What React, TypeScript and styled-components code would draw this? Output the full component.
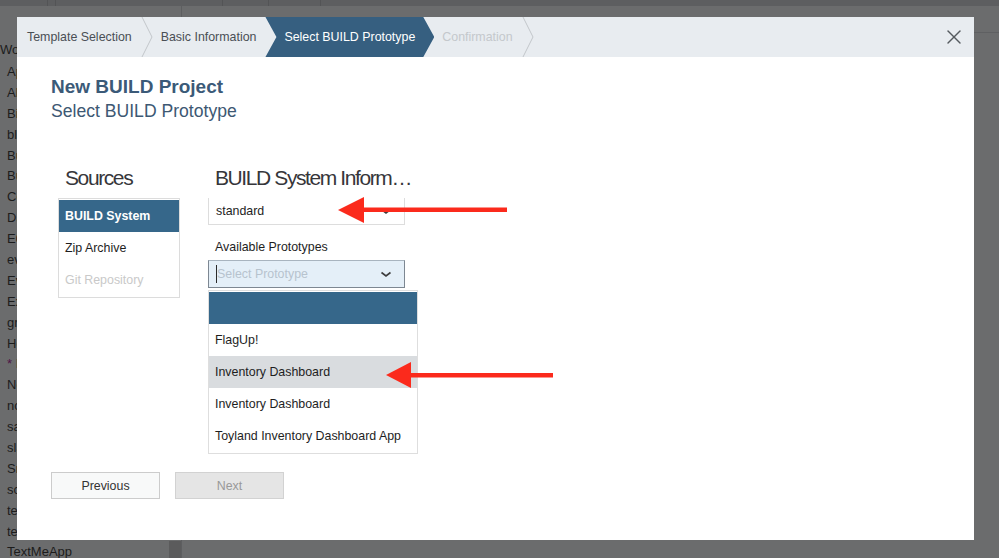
import React from "react";
import styled, { createGlobalStyle } from "styled-components";
import { X } from "lucide-react";

const Global = createGlobalStyle`
  html, body { margin: 0; padding: 0; }
  body { font-family: "Liberation Sans", Arial, sans-serif; background: #6b6c6d; }
  * { box-sizing: border-box; }
`;

const FS = "12.4px";

const Screen = styled.div`
  position: relative;
  width: 999px;
  height: 558px;
  overflow: hidden;
  background: #6b6c6d;
  display: flex;
  flex-direction: column;
`;

const TopStrip = styled.div`
  height: 6px;
  flex-shrink: 0;
  background: #5d5e60;
  display: flex;
`;

const StripCell = styled.div<{ $w: number }>`
  width: ${(p) => p.$w}px;
  border-right: 1px solid #535456;
`;

const PageBody = styled.div`
  flex: 1;
  display: flex;
  min-height: 0;
`;

const LeftPanel = styled.div`
  width: 182px;
  border-right: 1px solid #5d5e60;
  display: flex;
  flex-direction: column;
`;

const LeftToolbar = styled.div`
  height: 33px;
  flex-shrink: 0;
`;

const LeftRow = styled.div`
  flex: 1;
  display: flex;
  min-height: 0;
`;

const ListCol = styled.div`
  flex: 1;
  overflow: hidden;
  font-size: 13px;
  color: #1c1c1c;
`;

const ListHeading = styled.div`
  height: 22px;
  line-height: 22px;
  white-space: nowrap;
`;

const ListItem = styled.div`
  height: 20.9px;
  line-height: 21px;
  padding-left: 7px;
  white-space: nowrap;
`;

const Star = styled.span`
  color: #4e1647;
`;

const ScrollTrack = styled.div`
  width: 12px;
  display: flex;
  flex-direction: column;
`;

const ScrollThumb = styled.div`
  margin-top: auto;
  height: 17px;
  background: #5b5b5c;
`;

const MainArea = styled.div`
  flex: 1;
`;

const MainToolbar = styled.div`
  height: 27px;
  border-bottom: 1px solid #5f6062;
`;

/* ---------- Modal ---------- */

const Modal = styled.div`
  position: absolute;
  left: 17px;
  top: 17px;
  width: 957px;
  height: 523px;
  background: #ffffff;
  display: flex;
  flex-direction: column;
`;

const Header = styled.div`
  height: 40px;
  flex-shrink: 0;
  background: #e8ecf0;
  display: flex;
  align-items: stretch;
  font-size: ${FS};
`;

const Step = styled.div<{ $first?: boolean; $disabled?: boolean }>`
  display: flex;
  align-items: center;
  padding: 0 9px 0 ${(p) => (p.$first ? 10 : 8)}px;
  color: ${(p) => (p.$disabled ? "#c4c8cc" : "#4a4f55")};
  white-space: nowrap;
`;

const ActiveStep = styled.div`
  display: flex;
  align-items: center;
  padding: 0 19px 0 19px;
  color: #ffffff;
  background: #365f80;
  white-space: nowrap;
  clip-path: polygon(0 0, calc(100% - 11px) 0, 100% 50%, calc(100% - 11px) 100%, 0 100%, 11px 50%);
`;

const Sep = styled.svg`
  width: 12px;
  height: 40px;
  flex-shrink: 0;
`;

const Spacer = styled.div`
  flex: 1;
`;

const CloseButton = styled.button`
  border: 0;
  background: transparent;
  padding: 0;
  margin-right: 8px;
  display: flex;
  align-items: center;
  color: #555a5f;
  cursor: pointer;
`;

const Body = styled.div`
  padding: 18px 34px 0 34px;
  display: flex;
  flex-direction: column;
`;

const Title = styled.div`
  font-size: 19px;
  font-weight: bold;
  line-height: 24px;
  color: #3b5a78;
`;

const Subtitle = styled.div`
  font-size: 17.6px;
  line-height: 24px;
  color: #3d5873;
`;

const Columns = styled.div`
  margin-top: 40px;
  padding-left: 7px;
  display: flex;
  align-items: flex-start;
  gap: 28px;
`;

const LeftCol = styled.div`
  width: 122px;
  display: flex;
  flex-direction: column;
`;

const RightCol = styled.div`
  width: 210px;
  display: flex;
  flex-direction: column;
`;

const ColHeading = styled.div`
  font-family: "Liberation Sans", Arial, sans-serif;
  font-weight: normal;
  font-size: 21px;
  letter-spacing: -1.4px;
  line-height: 30px;
  color: #36363a;
  padding-left: 7px;
  max-width: 207px;
  white-space: nowrap;
  overflow: hidden;
  text-overflow: ellipsis;
  margin-bottom: 5px;
`;

const SourceBox = styled.div`
  border: 1px solid #dcdcdc;
  padding: 1px 0;
  display: flex;
  flex-direction: column;
`;

const SourceItem = styled.div<{ $active?: boolean; $disabled?: boolean }>`
  height: 32px;
  line-height: 32px;
  padding-left: 6px;
  font-size: ${FS};
  font-weight: ${(p) => (p.$active ? "bold" : "normal")};
  background: ${(p) => (p.$active ? "#36678a" : "transparent")};
  color: ${(p) => (p.$active ? "#ffffff" : p.$disabled ? "#c9c9c9" : "#1e1e1e")};
`;

const SelectBox = styled.div<{ $focused?: boolean }>`
  width: 197px;
  height: ${(p) => (p.$focused ? 28 : 27)}px;
  display: flex;
  align-items: center;
  padding: 0 12px 0 7px;
  font-size: ${FS};
  background: ${(p) => (p.$focused ? "#e4eff8" : "#ffffff")};
  border: 1px solid ${(p) => (p.$focused ? "#7d8792" : "#dddddd")};
  border-top: ${(p) => (p.$focused ? "1px solid #a8b4bf" : "none")};
  color: #1e1e1e;
`;

const SelectText = styled.span<{ $placeholder?: boolean }>`
  flex: 1;
  color: ${(p) => (p.$placeholder ? "#b7c3ce" : "#1e1e1e")};
  white-space: nowrap;
`;

const Caret = styled.span`
  width: 1px;
  height: 18px;
  background: #2a2a2a;
`;

const Chevron = styled.svg`
  width: 12px;
  height: 7px;
  flex-shrink: 0;
`;

const FieldLabel = styled.div`
  margin-top: 12px;
  margin-bottom: 3px;
  padding-left: 7px;
  font-size: ${FS};
  line-height: 20px;
  color: #1e1e1e;
`;

const Menu = styled.div`
  margin-top: 2px;
  width: 210px;
  border: 1px solid #dedede;
  padding: 1px 0;
  display: flex;
  flex-direction: column;
`;

const MenuItem = styled.div<{ $variant?: "blue" | "hover" }>`
  height: 32px;
  line-height: 32px;
  padding-left: 6px;
  font-size: ${FS};
  color: #1e1e1e;
  white-space: nowrap;
  background: ${(p) =>
    p.$variant === "blue" ? "#36678a" : p.$variant === "hover" ? "#d9dcdf" : "#ffffff"};
`;

const Footer = styled.div`
  margin-top: 18px;
  display: flex;
  gap: 15px;
`;

const Button = styled.button<{ $disabled?: boolean }>`
  width: 109px;
  height: 27px;
  font-family: "Liberation Sans", Arial, sans-serif;
  font-size: ${FS};
  border: 1px solid ${(p) => (p.$disabled ? "#d2d2d2" : "#cccccc")};
  background: ${(p) => (p.$disabled ? "#e5e5e5" : "#f8f9f9")};
  color: ${(p) => (p.$disabled ? "#999999" : "#333333")};
  padding: 0;
`;

const Annotations = styled.svg`
  position: absolute;
  left: 0;
  top: 0;
  width: 999px;
  height: 558px;
  pointer-events: none;
`;

const bgItems = [
  "AppBuilder",
  "Alpha",
  "Bike Rental",
  "blank",
  "Build Demo",
  "Business",
  "Contacts",
  "Dashboard",
  "E0 Test",
  "eval",
  "Events",
  "Expenses",
  "grid",
  "Hello World",
  "*Incomplete",
  "News",
  "notes",
  "sales",
  "slack",
  "Snippets",
  "scratch",
  "test",
  "test2",
  "TextMeApp",
];

const SepIcon = () => (
  <Sep viewBox="0 0 12 40">
    <polyline points="1,0 11,20 1,40" fill="none" stroke="#c2c6ca" strokeWidth="1" />
  </Sep>
);

const DownChevron = () => (
  <Chevron viewBox="0 0 12 7">
    <polyline points="1.5,1.5 6,5 10.5,1.5" fill="none" stroke="#3c3c3c" strokeWidth="1.6" />
  </Chevron>
);

export default function App() {
  return (
    <>
      <Global />
      <Screen>
        <TopStrip>
          <StripCell $w={48} />
          <StripCell $w={8} />
          <StripCell $w={167} />
          <StripCell $w={46} />
          <StripCell $w={52} />
        </TopStrip>
        <PageBody>
          <LeftPanel>
            <LeftToolbar />
            <LeftRow>
              <ListCol>
                <ListHeading>Workspace</ListHeading>
                {bgItems.map((n, i) =>
                  n.startsWith("*") ? (
                    <ListItem key={i}>
                      <Star>*</Star> {n.slice(1)}
                    </ListItem>
                  ) : (
                    <ListItem key={i}>{n}</ListItem>
                  )
                )}
              </ListCol>
              <ScrollTrack>
                <ScrollThumb />
              </ScrollTrack>
            </LeftRow>
          </LeftPanel>
          <MainArea>
            <MainToolbar />
          </MainArea>
        </PageBody>

        <Modal>
          <Header>
            <Step $first>Template Selection</Step>
            <SepIcon />
            <Step>Basic Information</Step>
            <ActiveStep>Select BUILD Prototype</ActiveStep>
            <Step $disabled>Confirmation</Step>
            <SepIcon />
            <Spacer />
            <CloseButton aria-label="Close">
              <X size={24} strokeWidth={1.4} />
            </CloseButton>
          </Header>
          <Body>
            <Title>New BUILD Project</Title>
            <Subtitle>Select BUILD Prototype</Subtitle>
            <Columns>
              <LeftCol>
                <ColHeading>Sources</ColHeading>
                <SourceBox>
                  <SourceItem $active>BUILD System</SourceItem>
                  <SourceItem>Zip Archive</SourceItem>
                  <SourceItem $disabled>Git Repository</SourceItem>
                </SourceBox>
              </LeftCol>
              <RightCol>
                <ColHeading>BUILD System Information</ColHeading>
                <SelectBox>
                  <SelectText>standard</SelectText>
                  <DownChevron />
                </SelectBox>
                <FieldLabel>Available Prototypes</FieldLabel>
                <SelectBox $focused>
                  <Caret />
                  <SelectText $placeholder>Select Prototype</SelectText>
                  <DownChevron />
                </SelectBox>
                <Menu>
                  <MenuItem $variant="blue" />
                  <MenuItem>FlagUp!</MenuItem>
                  <MenuItem $variant="hover">Inventory Dashboard</MenuItem>
                  <MenuItem>Inventory Dashboard</MenuItem>
                  <MenuItem>Toyland Inventory Dashboard App</MenuItem>
                </Menu>
              </RightCol>
            </Columns>
            <Footer>
              <Button>Previous</Button>
              <Button $disabled>Next</Button>
            </Footer>
          </Body>
        </Modal>

        <Annotations viewBox="0 0 999 558">
          <rect x="360" y="207.5" width="147" height="4.5" fill="#fb2a1c" />
          <polygon points="338,210 364,197 364,223" fill="#fb2a1c" />
          <rect x="408" y="373" width="145" height="4.5" fill="#fb2a1c" />
          <polygon points="386,375 411,362 411,388" fill="#fb2a1c" />
        </Annotations>
      </Screen>
    </>
  );
}
